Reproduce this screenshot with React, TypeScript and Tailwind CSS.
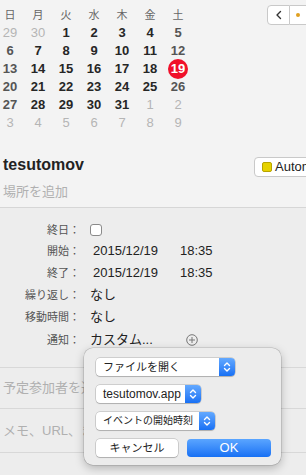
import React from "react";

const font = { fontFamily: '"Liberation Sans", "Noto Sans CJK JP", sans-serif' };

const weeks: { d: number; out?: boolean }[][] = [
  [{ d: 29, out: true }, { d: 30, out: true }, { d: 1 }, { d: 2 }, { d: 3 }, { d: 4 }, { d: 5 }],
  [{ d: 6 }, { d: 7 }, { d: 8 }, { d: 9 }, { d: 10 }, { d: 11 }, { d: 12 }],
  [{ d: 13 }, { d: 14 }, { d: 15 }, { d: 16 }, { d: 17 }, { d: 18 }, { d: 19 }],
  [{ d: 20 }, { d: 21 }, { d: 22 }, { d: 23 }, { d: 24 }, { d: 25 }, { d: 26 }],
  [{ d: 27 }, { d: 28 }, { d: 29 }, { d: 30 }, { d: 31 }, { d: 1, out: true }, { d: 2, out: true }],
  [{ d: 3, out: true }, { d: 4, out: true }, { d: 5, out: true }, { d: 6, out: true }, { d: 7, out: true }, { d: 8, out: true }, { d: 9, out: true }],
];

const heads = ["日", "月", "火", "水", "木", "金", "土"];

function Stepper() {
  return (
    <div className="w-[16px] h-full flex items-center justify-center rounded-r-[4px] bg-gradient-to-b from-[#63a9ff] to-[#1670f4]">
      <svg width="8" height="12" viewBox="0 0 8 12" fill="none" stroke="white" strokeWidth="1.4" strokeLinecap="round" strokeLinejoin="round">
        <path d="M1.5 4.5 L4 2 L6.5 4.5" />
        <path d="M1.5 7.5 L4 10 L6.5 7.5" />
      </svg>
    </div>
  );
}

function Select({ label, w, size = "text-[11px]" }: { label: string; w: string; size?: string }) {
  return (
    <div className={`${w} h-[18px] flex items-stretch rounded-[4px] bg-white shadow-[0_0_0_0.5px_rgba(0,0,0,0.25),0_1px_1px_rgba(0,0,0,0.15)]`}>
      <div className={`flex-1 pl-[7px] ${size} leading-[18px] text-[#222] whitespace-nowrap overflow-hidden`}>{label}</div>
      <Stepper />
    </div>
  );
}

function Row({ label, children, h = "h-[22px]" }: { label: string; children: React.ReactNode; h?: string }) {
  return (
    <div className={`flex items-center ${h}`}>
      <div className="w-[80px] text-right text-[11px] text-[#555] whitespace-nowrap">{label}</div>
      <div className="flex items-center pl-[10px]">{children}</div>
    </div>
  );
}

export default function App() {
  return (
    <div className="relative w-[306px] h-[475px] overflow-hidden bg-[#ededed]" style={font}>
      {/* top section */}
      <div className="bg-[#f3f3f3] border-b border-[#d6d6d6] h-[208px] flex flex-col">
        <div className="flex items-start">
          <div className="ml-[-4px] pt-[6px] grid grid-cols-[repeat(7,28px)] auto-rows-[18px]">
            {heads.map((h) => (
              <div key={h} className="flex items-center justify-center text-[11px] text-[#666]">{h}</div>
            ))}
            {weeks.flatMap((wk, wi) =>
              wk.map((c, ci) => {
                const today = c.d === 19 && !c.out;
                const weekend = ci === 0 || ci === 6;
                const color = c.out ? "text-[#b5b5b5] font-normal" : weekend ? "text-[#555] font-bold" : "text-[#262626] font-bold";
                return (
                  <div key={`${wi}-${ci}`} className="flex items-center justify-center">
                    {today ? (
                      <span className="w-[20px] h-[20px] rounded-full bg-[#f0102a] text-white font-bold text-[13px] flex items-center justify-center">19</span>
                    ) : (
                      <span className={`text-[13px] ${color}`}>{c.d}</span>
                    )}
                  </div>
                );
              })
            )}
          </div>
          <div className="flex-1" />
          <div className="flex mt-[5px] mr-[-8px] shrink-0">
            <div className="w-[23px] h-[20px] rounded-l-[4px] bg-white border border-[#c9c9c9] flex items-center justify-center">
              <svg width="8" height="10" viewBox="0 0 8 10" fill="none" stroke="#333" strokeWidth="1.4" strokeLinecap="round" strokeLinejoin="round">
                <path d="M5.5 1.5 L2 5 L5.5 8.5" />
              </svg>
            </div>
            <div className="w-[24px] h-[20px] rounded-r-[4px] bg-white border border-l-0 border-[#c9c9c9] flex items-center pl-[6px]">
              <div className="w-[4px] h-[4px] rounded-full bg-[#e0a020]" />
            </div>
          </div>
        </div>
        <div className="flex items-start justify-between mt-[24px]">
          <div className="pl-[3px] text-[16px] leading-[18px] font-bold text-[#222]">tesutomov</div>
          <div className="w-[62px] h-[20px] mr-[-10px] mt-[1px] bg-white border border-[#c9c9c9] rounded-[4px] flex items-center pl-[7px] gap-[3px] shrink-0 overflow-hidden">
            <div className="w-[10px] h-[10px] shrink-0 rounded-[2px] bg-[#e6d200] border border-[#b8a400]" />
            <span className="text-[13px] text-[#222] whitespace-nowrap">Autom</span>
          </div>
        </div>
        <div className="pl-[3px] mt-[5px] text-[13px] text-[#b0b0b0]">場所を追加</div>
      </div>

      {/* form */}
      <div className="pt-[12px] flex flex-col">
        <Row label="終日：" h="h-[20px]">
          <div className="w-[12px] h-[12px] rounded-[3px] border border-[#8a8a8a] bg-white" />
        </Row>
        <Row label="開始：">
          <span className="w-[90px] pl-[3px] text-[13px] text-[#222]">2015/12/19</span>
          <span className="text-[13px] text-[#222]">18:35</span>
        </Row>
        <Row label="終了：">
          <span className="w-[90px] pl-[3px] text-[13px] text-[#222]">2015/12/19</span>
          <span className="text-[13px] text-[#222]">18:35</span>
        </Row>
        <Row label="繰り返し：">
          <span className="text-[13px] text-[#222]">なし</span>
        </Row>
        <Row label="移動時間：">
          <span className="text-[13px] text-[#222]">なし</span>
        </Row>
        <Row label="通知：" h="h-[24px]">
          <span className="w-[96px] text-[13px] text-[#222] whitespace-nowrap">カスタム...</span>
          <svg width="12" height="12" viewBox="0 0 12 12" fill="none" stroke="#777" strokeWidth="1">
            <circle cx="6" cy="6" r="5.3" />
            <path d="M6 3 V9 M3 6 H9" />
          </svg>
        </Row>
        <div className="h-[16px] border-b border-[#d8d8d8]" />
        <div className="h-[41px] border-b border-[#d8d8d8] flex items-center pl-[3px] text-[13px] text-[#b0b0b0] whitespace-nowrap overflow-hidden">予定参加者を追加</div>
        <div className="h-[44px] border-b border-[#d8d8d8] flex items-center pl-[3px] text-[13px] text-[#b0b0b0] whitespace-nowrap overflow-hidden">メモ、URL、または添付</div>
      </div>

      {/* popup */}
      <div className="absolute left-[84px] top-[348px] w-[197px] h-[117px] rounded-[9px] bg-[#ececec] shadow-[0_0_0_0.5px_rgba(0,0,0,0.2),0_3px_10px_rgba(0,0,0,0.25)] pt-[10px] pl-[12px] flex flex-col gap-[9px]">
        <Select label="ファイルを開く" w="w-[139px]" />
        <Select label="tesutomov.app" w="w-[105px]" size="text-[12px]" />
        <Select label="イベントの開始時刻" w="w-[119px]" size="text-[10px]" />
        <div className="flex gap-[9px]">
          <div className="w-[82px] h-[18px] rounded-[4px] bg-white shadow-[0_0_0_0.5px_rgba(0,0,0,0.25),0_1px_1px_rgba(0,0,0,0.15)] flex items-center justify-center text-[11px] text-[#222]">キャンセル</div>
          <div className="w-[84px] h-[18px] rounded-[4px] bg-gradient-to-b from-[#5aa5ff] to-[#1670f4] flex items-center justify-center text-[13px] text-white">OK</div>
        </div>
      </div>
    </div>
  );
}
